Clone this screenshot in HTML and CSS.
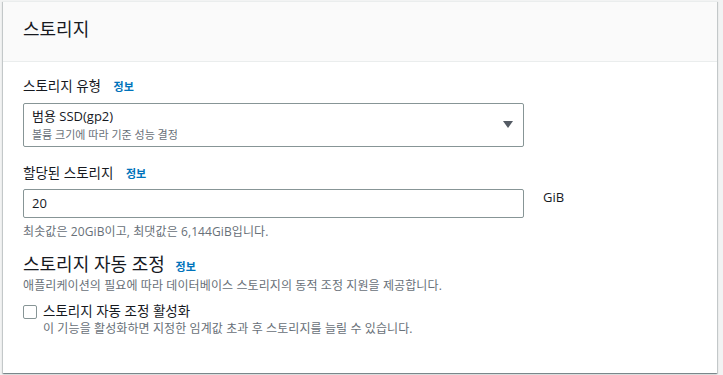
FILE: index.html
```html
<!DOCTYPE html>
<html lang="ko">
<head>
<meta charset="utf-8">
<link rel="stylesheet" href="styles.css">
</head>
<body>
<div class="card">
  <div class="card-header"><h2 class="title">스토리지</h2></div>
  <div class="card-body">
    <div class="field">
      <div class="label">스토리지 유형 <a class="info">정보</a></div>
      <div class="select">
        <div class="select-text">
          <div class="select-main">범용 SSD(gp2)</div>
          <div class="select-sub">볼륨 크기에 따라 기준 성능 결정</div>
        </div>
        <svg class="caret" width="10" height="8" viewBox="0 0 10 8"><path d="M0 0 H10 L5 7 Z" fill="#545b64"/></svg>
      </div>
    </div>
    <div class="field field-storage">
      <div class="label">할당된 스토리지 <a class="info">정보</a></div>
      <div class="input-row">
        <div class="input">20</div>
        <span class="unit">GiB</span>
      </div>
      <div class="hint hint-input">최솟값은 20GiB이고, 최댓값은 6,144GiB입니다.</div>
    </div>
    <div class="section">
      <div class="section-title">스토리지 자동 조정 <a class="info">정보</a></div>
      <div class="hint">애플리케이션의 필요에 따라 데이터베이스 스토리지의 동적 조정 지원을 제공합니다.</div>
      <div class="check-row">
        <span class="checkbox"></span>
        <div>
          <div class="check-label">스토리지 자동 조정 활성화</div>
          <div class="hint">이 기능을 활성화하면 지정한 임계값 초과 후 스토리지를 늘릴 수 있습니다.</div>
        </div>
      </div>
    </div>
  </div>
</div>
</body>
</html>
```
FILE: styles.css
```css
* { box-sizing: border-box; }
html, body { margin: 0; }
body {
  background: #f2f3f3;
  padding: 1px 6px 2px 3px;
  font-family: "Open Sans", "Noto Sans CJK KR", sans-serif;
  color: #16191f;
}
.card {
  background: #fff;
  height: 372px;
  box-shadow: 0 1px 1px 0 rgba(0,28,36,.3), 1px 1px 1px 0 rgba(0,28,36,.15), -1px 1px 1px 0 rgba(0,28,36,.15);
  border-top: 1px solid #eaeded;
}
.card-header {
  background: #fafafa;
  height: 60px;
  border-bottom: 1px solid #eaeded;
  display: flex;
  align-items: center;
  padding: 0 20px;
}
.title {
  margin: 0;
  font-size: 18px;
  font-weight: 400;
  line-height: 22px;
  padding-bottom: 5px;
}
.card-body {
  padding: 14px 20px 0 20px;
}
.label {
  font-size: 13.5px;
  line-height: 20px;
  margin-bottom: 6px;
}
.info {
  color: #0073bb;
  font-size: 11px;
  font-weight: 700;
  margin-left: 9px;
}
.select {
  width: 501px;
  height: 44px;
  border: 1px solid #879596;
  border-radius: 2px;
  display: flex;
  align-items: center;
  justify-content: space-between;
  padding: 0 10px 0 8px;
}
.select-main { font-size: 13px; line-height: 18px; }
.select-sub { font-size: 11px; line-height: 17px; color: #687078; padding-top: 1px; }
.field-storage { margin-top: 16px; }
.field-storage .label { margin-bottom: 5px; }
.input-row { display: flex; align-items: flex-start; }
.input {
  width: 501px;
  height: 29px;
  border: 1px solid #879596;
  border-radius: 2px;
  padding: 0 8px;
  font-size: 13px;
  line-height: 27px;
}
.unit { font-size: 13px; margin-left: 19px; line-height: 17px; }
.hint {
  font-size: 12px;
  line-height: 16px;
  color: #687078;
  margin-top: 4px;
  letter-spacing: 0.1px;
}
.hint-input { margin-top: 6px; }
.section { margin-top: 13px; }
.section-title { font-size: 18px; line-height: 22px; }
.section-title .info { margin-left: 6px; }
.section .hint { margin-top: 0; }
.check-row { display: flex; gap: 6px; margin-top: 8px; }
.checkbox {
  width: 14px; height: 14px;
  border: 1px solid #879596;
  border-radius: 2px;
  margin-top: 3px;
  flex: none;
}
.check-label { font-size: 13.5px; line-height: 19px; }
.check-row .hint { margin-top: 0; }
```
